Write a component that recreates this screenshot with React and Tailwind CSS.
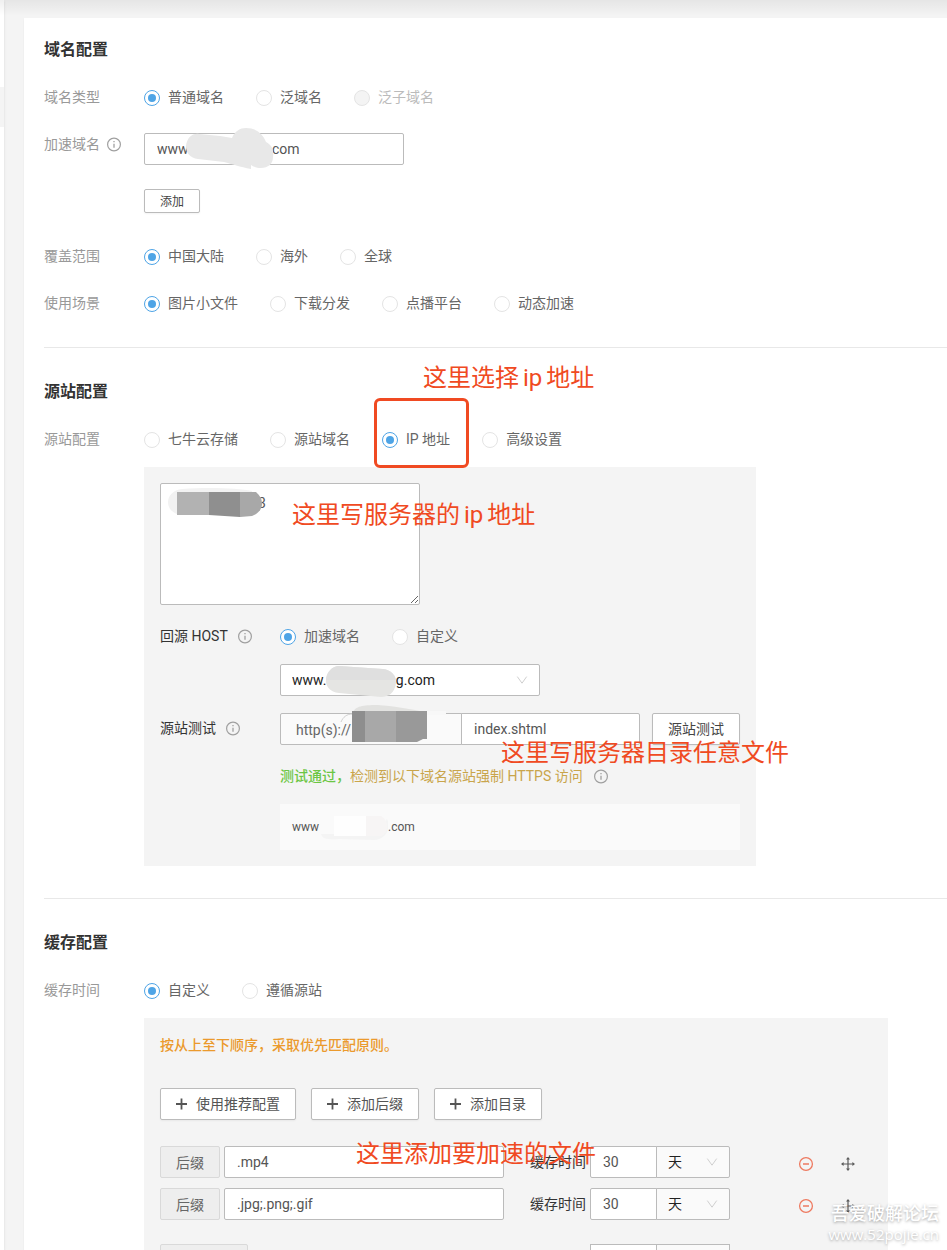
import { useState } from "react";

const nbsp = "\u00a0";

function InfoIcon() {
  return (
    <svg className="size-4 shrink-0 text-[#a0a0a0]" viewBox="0 0 16 16" fill="none" stroke="currentColor" strokeWidth="1.2">
      <circle cx="8" cy="7.5" r="6.4" />
      <path d="M8 6.7v4M8 4v1.3" strokeWidth="1.3" />
    </svg>
  );
}

function PlusIcon() {
  return (
    <svg className="size-3" viewBox="0 0 12 12" stroke="currentColor" strokeWidth="1.8">
      <path d="M5.5 .6v10.8M0 6h11" />
    </svg>
  );
}

function MinusCircle() {
  return (
    <svg className="size-4" viewBox="0 0 16 16" fill="none" stroke="#ee7a60" strokeWidth="1.3">
      <circle cx="8" cy="8" r="6.4" />
      <path d="M5 8h6" strokeWidth="1.5" />
    </svg>
  );
}

function MoveIcon() {
  return (
    <svg className="size-4" viewBox="0 0 16 16" fill="#5a5a5a">
      <path d="M7.4 3h1.2v10H7.4zM3 7.4h10v1.2H3z" />
      <path d="M8 1l2 2.6H6zM8 15l-2-2.6h4zM1 8l2.6-2v4zM15 8l-2.6 2V6z" />
    </svg>
  );
}

function Chevron() {
  return (
    <svg className="pointer-events-none absolute right-3 top-1/2 h-2 w-3 -translate-y-1/2" viewBox="0 0 12 8" fill="none" stroke="#cfcfcf">
      <path d="M1.3 .6L6 7.2L10.7 .6" />
    </svg>
  );
}

function Heading({ children }) {
  return <h2 className="mb-6 text-base leading-6 font-bold text-[#333]">{children}</h2>;
}

function Row({ label, info, children }) {
  return (
    <div className="flex">
      <div className="flex w-[100px] shrink-0 items-center gap-1.5 self-start text-[#999]">
        {label}
        {info && <InfoIcon />}
      </div>
      <div className="min-w-0 flex-1">{children}</div>
    </div>
  );
}

function Radios({ name, items, initial = 0, disabled = [], marked }) {
  const [value, setValue] = useState(items[initial]);
  return (
    <div className="flex flex-wrap gap-x-8">
      {items.map(item => {
        const off = disabled.includes(item);
        return (
          <label key={item} className={`relative flex items-center gap-2 ${off ? "text-[#bbb]" : "text-[#666]"}`}>
            <input type="radio" name={name} checked={value === item} disabled={off} onChange={() => setValue(item)}
              className="grid size-4 appearance-none place-content-center rounded-full border border-[#e4e4e4] bg-white before:size-2 before:rounded-full checked:border-[#4ea4e6] checked:before:bg-[#4ea4e6] disabled:bg-[#f4f4f4]" />
            {item}
            {marked === item && <span className="pointer-events-none absolute -top-[30px] -right-[19px] -bottom-[17px] -left-2 z-10 rounded-md border-3 border-[#f04a22]" />}
          </label>
        );
      })}
    </div>
  );
}

function Note({ className, children }) {
  return <p className={`pointer-events-none absolute z-10 text-2xl leading-9 whitespace-nowrap text-[#f04a22] ${className}`}>{children}</p>;
}

function AddButton({ children }) {
  return (
    <button className="flex h-8 items-center gap-2 rounded-xs border border-[#bbb] bg-white px-[15px] text-[#555] shadow-xs">
      <PlusIcon />{children}
    </button>
  );
}

function CacheRule({ kind, value, days, id }) {
  return (
    <div className="flex items-center">
      <span className="h-8 shrink-0 rounded-xs border border-[#d9d9d9] bg-[#eee] px-[15px] leading-8 text-[#666]">{kind}</span>
      <input aria-label={kind} defaultValue={value} className="ml-1 h-8 w-[280px] min-w-0 rounded-xs border border-[#bbb] bg-white px-3 text-[#555]" />
      <label htmlFor={id} className="ml-[26px] shrink-0 text-[#333]">缓存时间</label>
      <input id={id} defaultValue={days} className="ml-1 h-8 w-[67px] rounded-l-xs border border-[#bbb] bg-white px-3 text-[#555]" />
      <div className="relative -ml-px">
        <select aria-label="天" className="h-8 w-[74px] appearance-none rounded-r-xs border border-[#bbb] bg-[#fafafa] px-[11px] text-[#222]">
          <option>天</option>
        </select>
        <Chevron />
      </div>
      <button aria-label="−" className="mt-1 ml-[68px]"><MinusCircle /></button>
      <button aria-label="+" className="mt-1 ml-[26px]"><MoveIcon /></button>
    </div>
  );
}

export default function App() {
  return (
    <div className="relative flex h-screen overflow-hidden bg-[#f4f4f4] font-[Roboto,'Noto_Sans_CJK_SC',sans-serif] text-sm leading-[23px]">
      <div className="pointer-events-none absolute inset-x-0 top-0 h-4 bg-linear-to-b from-black/6 to-transparent" />
      <aside className="w-1 shrink-0 bg-white pt-[87px] shadow-sm">
        <div className="h-10 bg-[#f4f4f4]" />
      </aside>

      <main className="min-w-0 flex-1 pt-[18px] pl-5">
        <div className="bg-white pl-5 shadow-xs">
          <section className="pt-5 pb-8">
            <Heading>域名配置</Heading>
            <div className="flex flex-col gap-6">
              <Row label="域名类型">
                <Radios name="type" items={["普通域名", "泛域名", "泛子域名"]} disabled={["泛子域名"]} />
              </Row>
              <Row label="加速域名" info>
                <div className="relative max-w-[260px]">
                  <input aria-label="加速域名" defaultValue={"www" + nbsp.repeat(24) + "com"}
                    className="block h-8 w-full rounded-xs border border-[#bbb] bg-white px-3 text-[#555]" />
                  <svg className="absolute -top-1.5 left-[42px] h-[42px] w-[88px]" viewBox="0 0 88 42" fill="#e8e8e8">
                    <path d="M12 32C4 31 0 26 0 19C1 11 6 6 13 7L34 9L46 11C49 4 54 1 60 1C70 1 77 7 80 15C86 18 88 23 87 30C87 37 82 41 75 41C71 41 68 40 65 38V42C54 40 46 37 38 35Z" />
                  </svg>
                </div>
                <button className="mt-6 mb-2 block h-6 rounded-xs border border-[#bbb] bg-white px-[15px] text-xs leading-6 text-[#444] shadow-xs">添加</button>
              </Row>
              <Row label="覆盖范围">
                <Radios name="area" items={["中国大陆", "海外", "全球"]} />
              </Row>
              <Row label="使用场景">
                <Radios name="scene" items={["图片小文件", "下载分发", "点播平台", "动态加速"]} />
              </Row>
            </div>
          </section>

          <section className="relative border-t border-[#e8e8e8] py-8">
            <Note className="top-3 left-[379px]">这里选择<span className="mx-1">ip</span>地址</Note>
            <Heading>源站配置</Heading>
            <Row label="源站配置">
              <Radios name="source" items={["七牛云存储", "源站域名", "IP 地址", "高级设置"]} initial={2} marked="IP 地址" />
              <div className="relative mt-4 max-w-[612px] bg-[#f4f4f4] p-4">
                <Note className="top-[30px] left-[148px]">这里写服务器的<span className="mx-1">ip</span>地址</Note>
                <Note className="top-[268px] left-[357px]">这里写服务器目录任意文件</Note>

                <div className="relative max-w-[260px]">
                  <textarea aria-label="IP 地址" defaultValue="3"
                    className="block h-[122px] w-full rounded-xs border border-[#bbb] bg-white py-2 pl-[97px] text-[#555]" />
                  <svg className="absolute top-1 left-2 h-[30px] w-[96px]" viewBox="0 0 96 30">
                    <path d="M14 2C40 0 70 1 84 4V28H14C4 27 0 21 0 15S5 3 14 2Z" fill="#f2f2f2" />
                    <path d="M9 5h32v23H9z" fill="#b2b2b2" />
                    <path d="M41 5h31v25L41 28z" fill="#8f8f8f" />
                    <path d="M72 5h16c4 4 6 7 6 12s-4 10-10 12l-12 1z" fill="#a8a8a8" />
                  </svg>
                </div>

                <div className="mt-5 flex">
                  <div className="flex w-[120px] shrink-0 items-center gap-[9px] self-start text-[#333]">回源 HOST<InfoIcon /></div>
                  <div className="min-w-0 flex-1">
                    <Radios name="host" items={["加速域名", "自定义"]} />
                    <div className="relative mt-4 max-w-[260px]">
                      <select aria-label="加速域名" className="block h-8 w-full appearance-none rounded-xs border border-[#bbb] bg-white px-[11px] text-[#222]">
                        <option>{"www." + nbsp.repeat(20) + "g.com"}</option>
                      </select>
                      <Chevron />
                      <svg className="absolute top-0.5 left-[45px] h-8 w-[72px]" viewBox="0 0 72 32">
                        <path d="M14 0L58 3C66 4 71 9 71 17C70 26 64 31 56 31L14 27C5 26 0 20 1 13S7 0 14 0Z" fill="#e5e5e3" />
                        <path d="M1 14C1 7 7 0 14 0L58 3C66 4 70 9 71 14Z" fill="#dfdfdf" />
                      </svg>
                    </div>
                  </div>
                </div>

                <div className="mt-[17px] flex">
                  <div className="flex w-[120px] shrink-0 items-center gap-[9px] self-start pt-1 text-[#333]">源站测试<InfoIcon /></div>
                  <div className="min-w-0 flex-1">
                    <div className="flex items-center gap-3">
                      <div className="relative flex min-w-0 flex-1">
                        <span className="h-8 w-[182px] shrink-0 rounded-l-xs border border-[#bbb] bg-[#fafafa] px-[15px] leading-8 text-[#666]">http(s)://</span>
                        <input aria-label="源站测试" defaultValue="index.shtml"
                          className="-ml-px h-8 w-full min-w-0 rounded-r-xs border border-[#bbb] bg-white px-3 text-[#555]" />
                        <svg className="absolute -top-2 left-[60px] h-10 w-[110px]" viewBox="0 0 110 40">
                          <path d="M86 6h20v4H86z" fill="#f8f8f8" />
                          <path d="M12 8C16 1 22 0 38 0C52 1 70 4 86 7V12H12Z" fill="#e2e2e0" />
                          <path d="M1 17C3 12 7 9 12 9" fill="none" stroke="#d0d0d0" />
                          <path d="M12 6h13v31H12z" fill="#8e8e8e" />
                          <path d="M25 6h31v31H25z" fill="#a8a8a8" />
                          <path d="M56 6h31v28h-4l-6 3H56z" fill="#999" />
                        </svg>
                      </div>
                      <button className="h-8 shrink-0 rounded-xs border border-[#bbb] bg-white px-[15px] text-[#444] shadow-xs">源站测试</button>
                    </div>
                    <p className="mt-5 flex items-center text-[#c9a54b]">
                      <span className="font-medium text-[#6cc644]">测试通过，</span>检测到以下域名源站强制 HTTPS 访问
                      <span className="ml-2.5"><InfoIcon /></span>
                    </p>
                    <div className="mt-4 flex h-[46px] items-center bg-[#fafafa] px-3 text-xs text-[#555]">
                      www
                      <svg className="h-8 w-[69px]" viewBox="0 0 69 32">
                        <path d="M2 23H58L68 8C72 16 68 28 55 29L20 28C10 29 3 28 2 23Z" fill="#f4f4f4" />
                        <path d="M15 5h32v20H15z" fill="#fefefe" />
                        <path d="M47 5h15c5 3 7 8 6 12s-3 7-6 8H47z" fill="#f7f5f5" />
                      </svg>
                      .com
                    </div>
                  </div>
                </div>
              </div>
            </Row>
          </section>

          <section className="border-t border-[#e8e8e8] py-8">
            <Heading>缓存配置</Heading>
            <Row label="缓存时间">
              <Radios name="cache" items={["自定义", "遵循源站"]} />
              <div className="relative mt-4 max-w-[744px] bg-[#f4f4f4] p-4">
                <Note className="top-[118px] left-[212px]">这里添加要加速的文件</Note>
                <p className="font-medium text-[#eb9a2d]">按从上至下顺序，采取优先匹配原则。</p>
                <div className="mt-[31px] flex gap-[15px]">
                  <AddButton>使用推荐配置</AddButton>
                  <AddButton>添加后缀</AddButton>
                  <AddButton>添加目录</AddButton>
                </div>
                <div className="mt-[26px] flex flex-col gap-2.5">
                  <CacheRule id="t1" kind="后缀" value=".mp4" days="30" />
                  <CacheRule id="t2" kind="后缀" value=".jpg;.png;.gif" days="30" />
                </div>
                <div className="mt-6 flex">
                  <span className="h-8 w-[88px] rounded-xs border border-[#d9d9d9] bg-[#eee]" />
                  <span className="ml-[342px] h-8 w-[67px] border border-[#bbb] bg-white" />
                  <span className="-ml-px h-8 w-[74px] border border-[#bbb] bg-[#fafafa]" />
                </div>
              </div>
            </Row>
          </section>
        </div>
      </main>

      <div className="pointer-events-none absolute right-2 bottom-1.5 text-right text-white text-shadow-[0_1px_3px_rgb(0_0_0/0.35)]">
        <p className="text-lg leading-5 font-medium">吾爱破解论坛</p>
        <p className="font-['Open_Sans',sans-serif] text-[15px] leading-5">www.52pojie.cn</p>
      </div>
    </div>
  );
}
